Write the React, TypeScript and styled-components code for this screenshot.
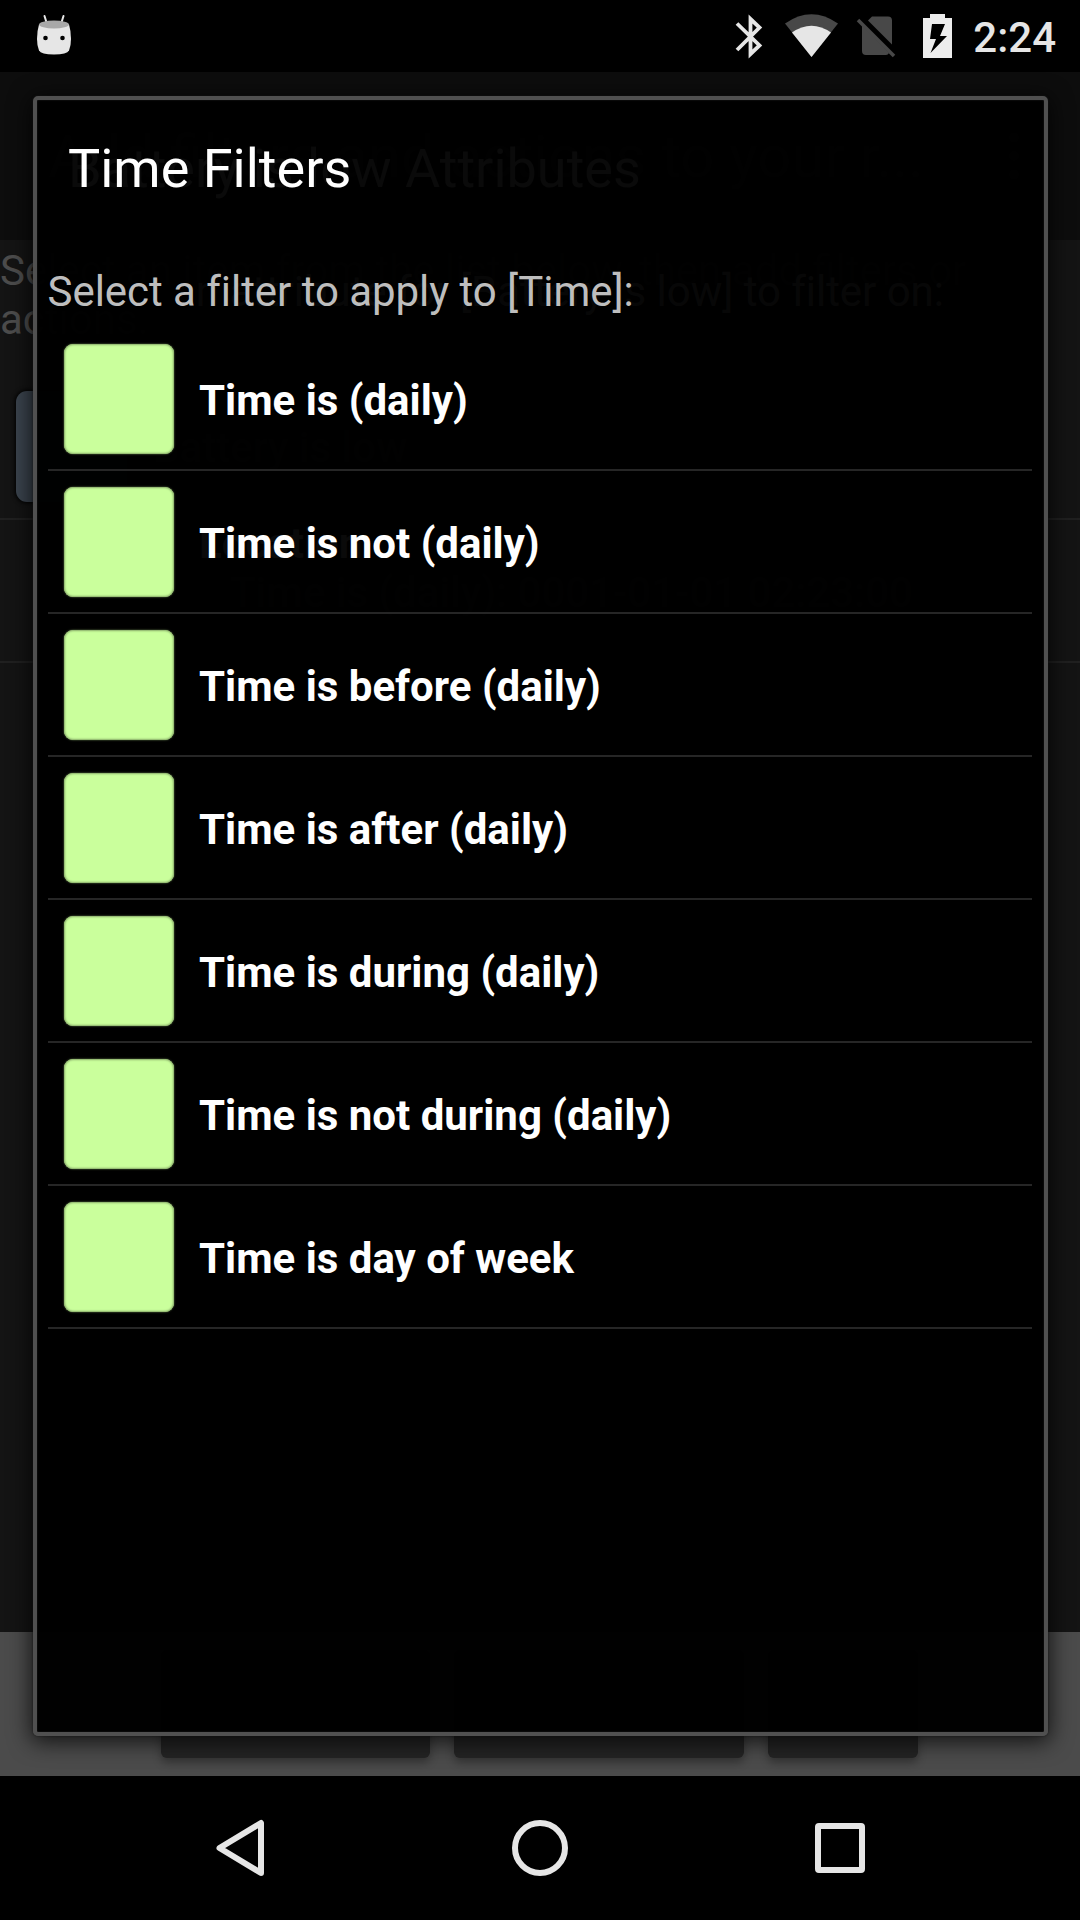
import React from "react";
import styled, { createGlobalStyle } from "styled-components";

const Global = createGlobalStyle`
  html, body { margin: 0; background: #000; }
  * { box-sizing: border-box; }
`;

const Phone = styled.div`
  width: 1080px;
  height: 1920px;
  display: flex;
  flex-direction: column;
  background: #000;
  font-family: Roboto, "Noto Sans", sans-serif;
  overflow: hidden;
`;

const StatusBar = styled.header`
  height: 72px;
  flex: none;
  display: flex;
  align-items: center;
  justify-content: space-between;
  padding: 0 24px 0 36px;
`;

const StatusIcons = styled.div`
  display: flex;
  align-items: center;
`;

const Clock = styled.span`
  margin-left: 20px;
  font-size: 42px;
  line-height: 72px;
  font-weight: 500;
  color: #e6e6e6;
  padding-top: 3px;
`;

const Stage = styled.main`
  height: 1704px;
  flex: none;
  display: grid;
`;

const Page = styled.section`
  grid-area: 1 / 1;
  display: flex;
  flex-direction: column;
  background: #141414;
  min-width: 0;
`;

const AppBar = styled.div`
  height: 168px;
  flex: none;
  display: flex;
  align-items: center;
  justify-content: space-between;
  padding: 0 60px 0 48px;
  background: #0d0d0d;
  font-size: 60px;
  color: #606060;
  white-space: nowrap;
`;

const PageHint = styled.p`
  margin: 0;
  padding-top: 6px;
  height: 137px;
  font-size: 42px;
  line-height: 49px;
  color: #4c4c4c;
`;

const PageRow = styled.div<{ $left: number; $line: number }>`
  height: 143px;
  display: flex;
  align-items: flex-start;
  gap: 26px;
  padding: 14px 0 0 ${(p) => p.$left}px;
  border-bottom: 2px solid #202020;
  font-size: 42px;
  font-weight: 500;
  line-height: ${(p) => p.$line}px;
  color: #606060;
  white-space: nowrap;
`;

const PageSwatch = styled.span`
  width: 111px;
  height: 111px;
  border-radius: 11px;
  background: #3b444e;
  box-shadow: 0 0 4px 1px #000;
`;

const Footer = styled.div`
  margin-top: auto;
  height: 144px;
  display: flex;
  justify-content: center;
  gap: 24px;
  padding: 18px 2px 18px 0;
  background: #4b4b4b;
`;

const FooterButton = styled.span<{ $w: number }>`
  width: ${(p) => p.$w}px;
  border-radius: 6px;
  background: #242424;
  box-shadow: 0 5px 8px rgba(0, 0, 0, 0.3);
  color: #080808;
  font-size: 42px;
  font-weight: 500;
  line-height: 108px;
  text-align: center;
`;

const Dialog = styled.section<{ $front?: boolean }>`
  grid-area: 1 / 1;
  z-index: ${(p) => (p.$front ? 2 : 1)};
  margin: 24px 32px 40px 33px;
  display: flex;
  flex-direction: column;
  border: 4px solid ${(p) => (p.$front ? "#505050" : "transparent")};
  border-radius: 5px;
  background: ${(p) => (p.$front ? "rgba(0,0,0,0.95)" : "rgba(0,0,0,0.7)")};
  background-clip: padding-box;
  box-shadow: ${(p) =>
    p.$front
      ? "0 4px 22px 2px rgba(0,0,0,0.75), 0 0 2px #222, inset 0 0 2px #222"
      : "none"};
  padding: 0 12px 0 11px;
  min-width: 0;
`;

const Title = styled.h1<{ $dim?: boolean }>`
  margin: 0;
  height: 138px;
  padding: 4px 0 0 20px;
  font-size: 54px;
  font-weight: 400;
  line-height: 130px;
  color: ${(p) => (p.$dim ? "#b8b8b8" : "#fff")};
`;

const Message = styled.p<{ $dim?: boolean }>`
  margin: 0 0 0 -0.5px;
  height: 90px;
  padding-top: 29px;
  font-size: 42px;
  letter-spacing: -0.04px;
  line-height: 49px;
  color: ${(p) => (p.$dim ? "#909090" : "#bebebe")};
  white-space: nowrap;
`;

const List = styled.ul`
  margin: 0;
  padding: 0;
  list-style: none;
`;

const Item = styled.li<{ $dim?: boolean }>`
  height: 143px;
  display: flex;
  align-items: center;
  gap: 25px;
  padding-left: 16px;
  border-bottom: 2px solid ${(p) => (p.$dim ? "transparent" : "#262626")};
  font-size: 42px;
  font-weight: 700;
  color: ${(p) => (p.$dim ? "#b8b8b8" : "#fff")};
`;

const ItemLabel = styled.span`
  padding-top: 4px;
`;

const Swatch = styled.span<{ $dim?: boolean }>`
  width: 110px;
  height: 110px;
  flex: none;
  border-radius: 9px;
  background: ${(p) => (p.$dim ? "transparent" : "#caff9c")};
  box-shadow: ${(p) =>
    p.$dim ? "none" : "inset 0 0 2px 1px #88aa69, 0 0 2px #6f8c56"};
`;

const NavBar = styled.nav`
  height: 144px;
  flex: none;
  display: flex;
  justify-content: center;
  align-items: center;
  gap: 204px;
`;

const attributes = ["Time", "Location"];

const filters = [
  "Time is (daily)",
  "Time is not (daily)",
  "Time is before (daily)",
  "Time is after (daily)",
  "Time is during (daily)",
  "Time is not during (daily)",
  "Time is day of week",
];

const Robot = () => (
  <svg width="36" height="44" viewBox="0 0 36 44">
    <path d="M8.500 2 11 10M27.500 2 25 10" stroke="#e6e6e6" strokeWidth="2" strokeLinecap="round" />
    <path d="M3 10.500Q1 17 1 25q0 7 2 11.500 2 4 15 4t15-4q2-4.500 2-11.500 0-8-2-14.500Z" fill="#e6e6e6" />
    <ellipse cx="18" cy="10.500" rx="15" ry="4" fill="#a8a8a8" />
    <circle cx="9.500" cy="24" r="2.300" />
    <circle cx="26.500" cy="24" r="2.300" />
  </svg>
);

const StatusGlyphs = () => (
  <svg width="218" height="72" viewBox="735 0 218 72">
    <path d="M737 23.500 759.500 45.500 750.500 54V19L759.500 27.500 737 50" fill="none" stroke="#e6e6e6" strokeWidth="3.800" />
    <path d="M811.500 57 785 23.500Q811.500 5 838 23.500Z" fill="#484848" />
    <path d="M811.500 57 792 32.500Q811.500 19 831 32.500Z" fill="#e6e6e6" />
    <path d="M868 20.500 872 16.500h16q4 0 4 4V44.500ZM862 25 889 53Q888 55 886 55h-20q-4 0-4-4Z" fill="#484848" />
    <path d="M858 20 894 56" stroke="#484848" strokeWidth="3.500" />
    <path fillRule="evenodd" d="M923 18h7v-4h15v4h7v40h-29ZM932 24 930 39h6l-5.500 14L947 36h-7l5-12Z" fill="#ededed" />
  </svg>
);

const Overflow = () => (
  <svg width="12" height="48" viewBox="0 0 12 48" fill="#606060">
    <circle cx="6" cy="5.500" r="5" />
    <circle cx="6" cy="24" r="5" />
    <circle cx="6" cy="42.500" r="5" />
  </svg>
);

export default function App() {
  return (
    <Phone>
      <Global />
      <StatusBar>
        <Robot />
        <StatusIcons>
          <StatusGlyphs />
          <Clock>2:24</Clock>
        </StatusIcons>
      </StatusBar>
      <Stage>
        <Page>
          <AppBar>
            <span>Add filters and actions to your r...</span>
            <Overflow />
          </AppBar>
          <PageHint>
            Select an item from the list below, then add filters or
            <br />
            actions.
          </PageHint>
          <PageRow $left={16} $line={114}>
            <PageSwatch />
            Battery is low
          </PageRow>
          <PageRow $left={230} $line={118}>
            Time is (daily): 0001-01-01 02:23:00
          </PageRow>
          <Footer>
            <FooterButton $w={269}>ADD FILTER</FooterButton>
            <FooterButton $w={290}>ADD ACTION</FooterButton>
            <FooterButton $w={150}>SAVE</FooterButton>
          </Footer>
        </Page>
        <Dialog>
          <Title $dim>Battery is low Attributes</Title>
          <Message $dim>Select an attribute for [Battery is low] to filter on:</Message>
          <List>
            {attributes.map((name) => (
              <Item key={name} $dim>
                <Swatch $dim />
                <ItemLabel>{name}</ItemLabel>
              </Item>
            ))}
          </List>
        </Dialog>
        <Dialog $front>
          <Title>Time Filters</Title>
          <Message>Select a filter to apply to [Time]:</Message>
          <List>
            {filters.map((name) => (
              <Item key={name}>
                <Swatch />
                <ItemLabel>{name}</ItemLabel>
              </Item>
            ))}
          </List>
        </Dialog>
      </Stage>
      <NavBar>
        <svg width="96" height="96" viewBox="0 0 96 96">
          <path d="M69 23V73L27.500 48Z" fill="none" stroke="#e6e6e6" strokeWidth="6" strokeLinejoin="round" />
        </svg>
        <svg width="96" height="96" viewBox="0 0 96 96">
          <circle cx="48" cy="48" r="25" fill="none" stroke="#e6e6e6" strokeWidth="6" />
        </svg>
        <svg width="96" height="96" viewBox="0 0 96 96">
          <rect x="26" y="26" width="44" height="44" rx="1" fill="none" stroke="#e6e6e6" strokeWidth="6" strokeLinejoin="round" />
        </svg>
      </NavBar>
    </Phone>
  );
}
